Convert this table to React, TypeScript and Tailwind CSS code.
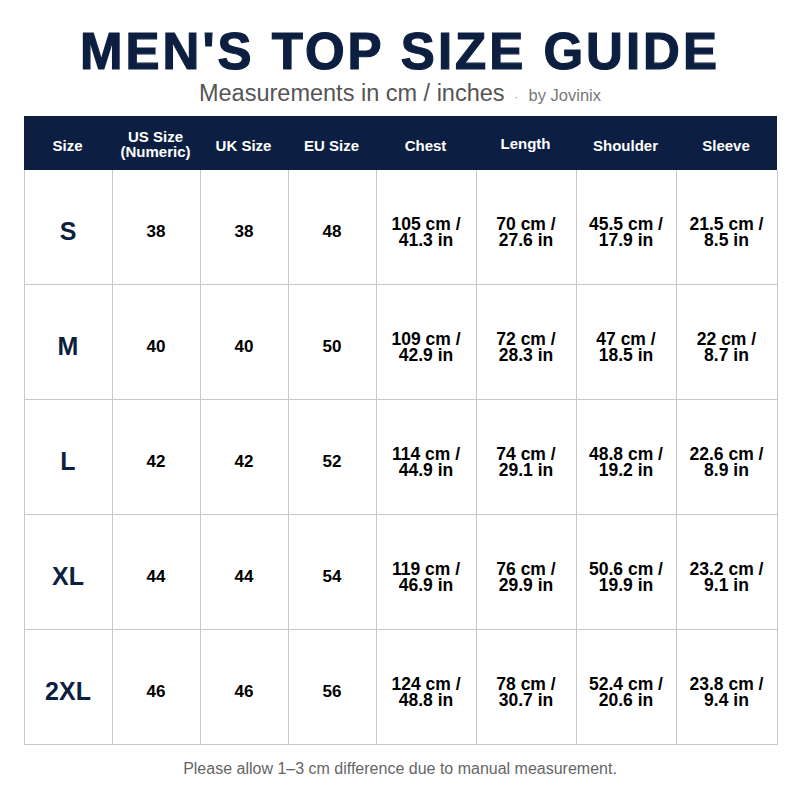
import React from 'react';

// size rows: [size, us, uk, eu, chest, length, shoulder, sleeve]
const ROWS: string[][] = [
  ['S', '38', '38', '48', '105 cm /|41.3 in', '70 cm /|27.6 in', '45.5 cm /|17.9 in', '21.5 cm /|8.5 in'],
  ['M', '40', '40', '50', '109 cm /|42.9 in', '72 cm /|28.3 in', '47 cm /|18.5 in', '22 cm /|8.7 in'],
  ['L', '42', '42', '52', '114 cm /|44.9 in', '74 cm /|29.1 in', '48.8 cm /|19.2 in', '22.6 cm /|8.9 in'],
  ['XL', '44', '44', '54', '119 cm /|46.9 in', '76 cm /|29.9 in', '50.6 cm /|19.9 in', '23.2 cm /|9.1 in'],
  ['2XL', '46', '46', '56', '124 cm /|48.8 in', '78 cm /|30.7 in', '52.4 cm /|20.6 in', '23.8 cm /|9.4 in'],
];

const GRID = 'grid grid-cols-[88px_88px_88px_88px_100px_100px_100px_101px]';

export default function App() {
  return (
    <div className="w-[800px] h-[800px] bg-white flex flex-col items-center font-['Liberation_Sans',Arial,sans-serif]">
      {/* title */}
      <h1 className="mt-[26px] text-[51px] leading-[52px] font-bold tracking-[3px] text-[#0d1f41] [-webkit-text-stroke:1.2px_#0d1f41]">
        MEN'S TOP SIZE GUIDE
      </h1>
      <div className="-mt-[2px] flex items-baseline h-[28px]">
        <span className="text-[23.5px] text-[#555]">Measurements in cm / inches</span>
        <span className="mx-[10px] text-[12px] text-[#999]">·</span>
        <span className="text-[16.5px] text-[#777]">by Jovinix</span>
      </div>

      {/* table */}
      <div className="mt-[12px] w-[753px]">
        <div className={`${GRID} h-[54px] bg-[#0c1f42] text-white font-bold text-[15px] leading-[15px]`}>
          <div className="flex items-center justify-center pt-[5px]">Size</div>
          <div className="flex items-center justify-center text-center leading-[15px] pt-[1px]">US Size<br />(Numeric)</div>
          <div className="flex items-center justify-center pt-[5px]">UK Size</div>
          <div className="flex items-center justify-center pt-[5px]">EU Size</div>
          <div className="flex items-center justify-center pt-[5px]">Chest</div>
          <div className="flex items-center justify-center pt-[1px]">Length</div>
          <div className="flex items-center justify-center pt-[5px]">Shoulder</div>
          <div className="flex items-center justify-center pt-[5px]">Sleeve</div>
        </div>
        <div className="border-l border-[#c8c8c8]">
          {ROWS.map((row) => (
            <div key={row[0]} className={`${GRID} h-[115px]`}>
              {row.map((cell, i) => (
                <div
                  key={i}
                  className="border-r border-b border-[#c8c8c8] flex items-center justify-center text-center pt-[9px]"
                >
                  {i === 0 ? (
                    <span className="text-[25px] font-bold text-[#0d1f41]">{cell}</span>
                  ) : i < 4 ? (
                    <span className="text-[17px] font-bold text-black">{cell}</span>
                  ) : (
                    <span className="text-[17.5px] leading-[16px] font-bold text-black">
                      {cell.split('|')[0]}
                      <br />
                      {cell.split('|')[1]}
                    </span>
                  )}
                </div>
              ))}
            </div>
          ))}
        </div>
      </div>

      <p className="mt-[12px] text-[16px] text-[#666]">
        Please allow 1–3 cm difference due to manual measurement.
      </p>
    </div>
  );
}
